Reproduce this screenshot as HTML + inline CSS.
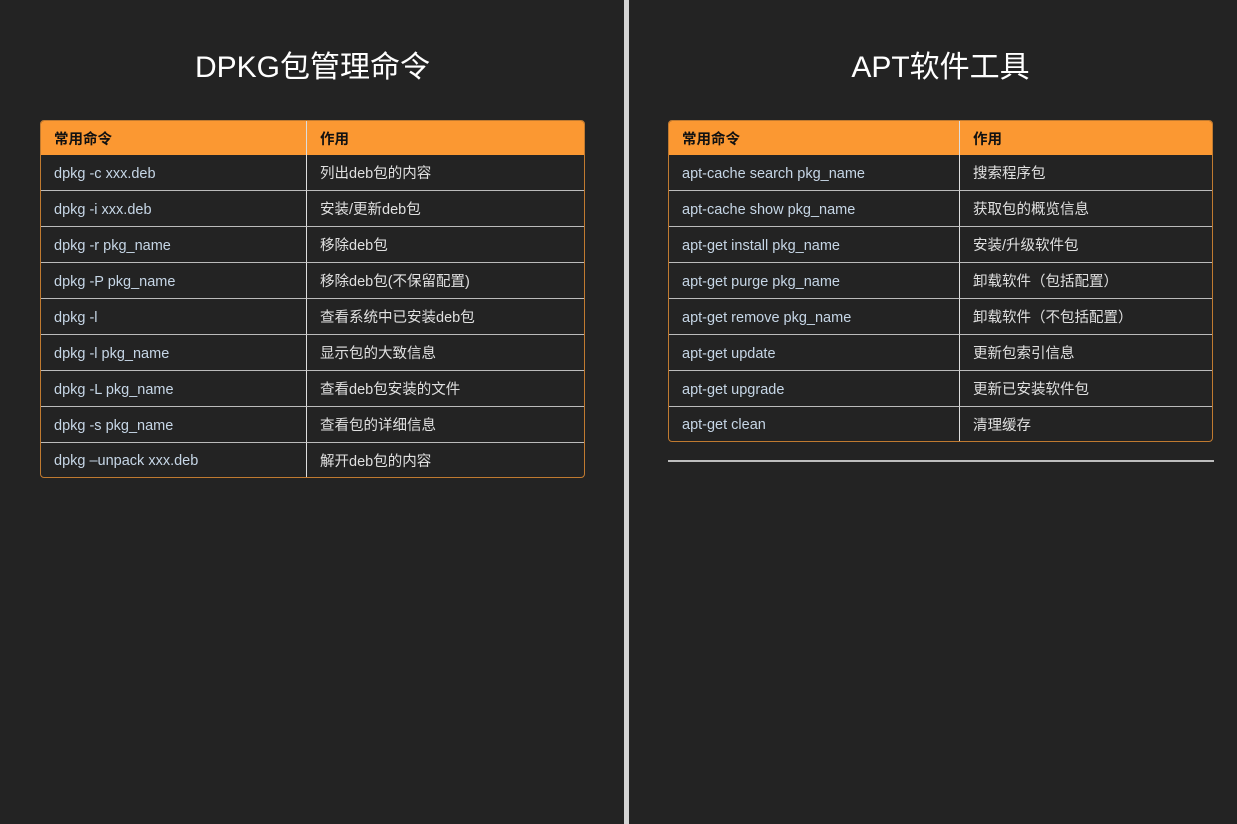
<!DOCTYPE html>
<html><head><meta charset="utf-8"><style>
body{margin:0;width:1237px;height:824px;background:#232323;position:relative;overflow:hidden;font-family:"Liberation Sans","Noto Sans CJK SC",sans-serif;}
.div{position:absolute;left:624px;top:0;width:5px;height:824px;background:#d4d4d4;}
h1{position:absolute;top:48px;margin:0;font-weight:normal;color:#fff;font-size:30px;text-align:center;width:545px;line-height:40px;}
table{position:absolute;top:120px;width:545px;border-collapse:separate;border-spacing:0;border:1px solid #c07a30;border-radius:4px;overflow:hidden;font-size:14.5px;}
td,th{height:35px;padding:0 0 0 13px;text-align:left;border-bottom:1px solid #bbb;}
th{background:#fb9832;color:#111;font-weight:bold;height:34px;border-bottom:none;}
tr:last-child td{border-bottom:none;height:34px;}
td:first-child,th:first-child{border-right:1px solid #ddd;}
td:first-child{color:#c6d6e6;padding-top:2px;height:33px;}
tr:last-child td:first-child{height:32px;}
td:last-child{color:#e0e0e0;}
.hr{position:absolute;left:668px;top:460px;width:546px;height:2px;background:#bdbdbd;}
</style></head><body>
<div class="div"></div>
<h1 style="left:40px">DPKG包管理命令</h1>
<h1 style="left:668px">APT软件工具</h1>
<table style="left:40px"><colgroup><col style="width:266px"><col></colgroup>
<tr><th>常用命令</th><th>作用</th></tr>
<tr><td>dpkg -c xxx.deb</td><td>列出deb包的内容</td></tr>
<tr><td>dpkg -i xxx.deb</td><td>安装/更新deb包</td></tr>
<tr><td>dpkg -r pkg_name</td><td>移除deb包</td></tr>
<tr><td>dpkg -P pkg_name</td><td>移除deb包(不保留配置)</td></tr>
<tr><td>dpkg -l</td><td>查看系统中已安装deb包</td></tr>
<tr><td>dpkg -l pkg_name</td><td>显示包的大致信息</td></tr>
<tr><td>dpkg -L pkg_name</td><td>查看deb包安装的文件</td></tr>
<tr><td>dpkg -s pkg_name</td><td>查看包的详细信息</td></tr>
<tr><td>dpkg –unpack xxx.deb</td><td>解开deb包的内容</td></tr>
</table>
<table style="left:668px"><colgroup><col style="width:291px"><col></colgroup>
<tr><th>常用命令</th><th>作用</th></tr>
<tr><td>apt-cache search pkg_name</td><td>搜索程序包</td></tr>
<tr><td>apt-cache show pkg_name</td><td>获取包的概览信息</td></tr>
<tr><td>apt-get install pkg_name</td><td>安装/升级软件包</td></tr>
<tr><td>apt-get purge pkg_name</td><td>卸载软件（包括配置）</td></tr>
<tr><td>apt-get remove pkg_name</td><td>卸载软件（不包括配置）</td></tr>
<tr><td>apt-get update</td><td>更新包索引信息</td></tr>
<tr><td>apt-get upgrade</td><td>更新已安装软件包</td></tr>
<tr><td>apt-get clean</td><td>清理缓存</td></tr>
</table>
<div class="hr"></div>
</body></html>
